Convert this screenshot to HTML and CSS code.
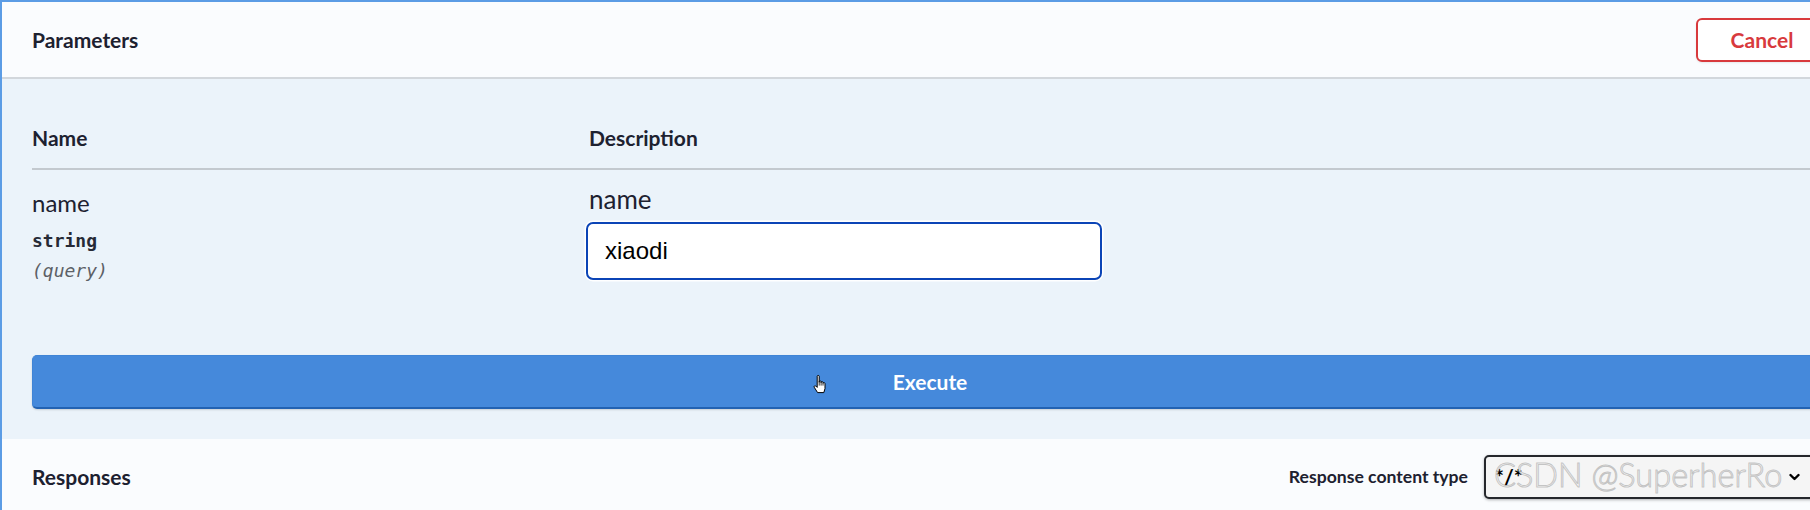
FILE: index.html
```html
<!DOCTYPE html>
<html lang="en">
<head>
<meta charset="utf-8">
<title>Parameters</title>
<link rel="stylesheet" href="styles.css">
</head>
<body>
<div class="opblock">
  <div class="section-header">
    <h4 class="section-title">Parameters</h4>
    <button class="btn-cancel" type="button">Cancel</button>
  </div>

  <div class="params">
    <div class="param-head">
      <div class="th">Name</div>
      <div class="th">Description</div>
    </div>
    <div class="param-row">
      <div class="col-name">
        <div class="param-name">name</div>
        <div class="param-type">string</div>
        <div class="param-in">(query)</div>
      </div>
      <div class="col-desc">
        <div class="desc-text">name</div>
        <input class="desc-input" type="text" value="xiaodi">
      </div>
    </div>
    <div class="execute-wrap">
      <button class="btn-execute" type="button">Execute</button>
      <svg class="cursor" width="14" height="20" viewBox="0 0 14 20" aria-hidden="true">
        <path d="M4.2 2.2C4.2 1.2 6.2 1.2 6.2 2.2V8.4V7.6C6.2 6.7 8.1 6.7 8.1 7.6V8.8V8.3C8.1 7.5 10 7.5 10 8.3V9.4V9.2C10 8.5 12 8.5 12 9.4V14.6L10.8 18.6H4.6L1.2 13.2C0.7 12.3 1.8 11.3 2.8 12L4.2 13.4Z" fill="#fff" stroke="#000" stroke-width="1" stroke-linejoin="round"/>
        <path d="M6.2 8.4V11.6M8.1 8.8V11.6M10 9.4V11.6" stroke="#000" stroke-width="0.8"/>
      </svg>
    </div>
  </div>

  <div class="responses-header">
    <h4 class="section-title">Responses</h4>
    <div class="content-type">
      <span class="ct-label">Response content type</span>
      <div class="ct-select">
        <span class="ct-value">*/*</span>
        <svg class="chevron" width="11" height="8" viewBox="0 0 11 8" aria-hidden="true">
          <path d="M1.5 2L5.5 6L9.5 2" fill="none" stroke="#000" stroke-width="2.4" stroke-linecap="round" stroke-linejoin="round"/>
        </svg>
        <span class="watermark">CSDN @SuperherRo</span>
      </div>
    </div>
  </div>
</div>
</body>
</html>
```

FILE: styles.css
```css
html, body {
  margin: 0;
  padding: 0;
  background: #fafcfe;
  overflow: hidden;
}

body {
  width: 1810px;
  height: 510px;
}

.opblock {
  width: 1860px;
  box-sizing: border-box;
  border-left: 2px solid #5b9ce5;
  border-top: 2px solid #5b9ce5;
  font-family: "Lato", "Roboto", sans-serif;
  color: #1d2130;
}

.section-title {
  margin: 0;
  font-family: "Lato", sans-serif;
  font-weight: 700;
  font-size: 21px;
  line-height: 25px;
  color: #1d2130;
}

/* ---------- header ---------- */
.section-header {
  height: 75px;
  padding: 0 32px 0 30px;
  background: #fafcfe;
  border-bottom: 2px solid #d2d7dc;
  display: flex;
  align-items: center;
  justify-content: space-between;
}

.btn-cancel {
  width: 132px;
  height: 44px;
  box-sizing: border-box;
  border: 2px solid #d83a3d;
  border-radius: 6px;
  background: #fff;
  color: #d83a3d;
  font-family: "Lato", sans-serif;
  font-weight: 700;
  font-size: 21px;
  padding: 0;
  box-shadow: 0 1px 2px rgba(0, 0, 0, 0.08);
}

/* ---------- parameters body ---------- */
.params {
  background: #ebf3fa;
  padding: 46px 32px 30px 30px;
}

.param-head {
  display: grid;
  grid-template-columns: 557px 1fr;
  border-bottom: 2px solid #c3c9cf;
}

.th {
  font-weight: 700;
  font-size: 21px;
  line-height: 25px;
  padding-bottom: 18px;
}

.param-row {
  display: grid;
  grid-template-columns: 557px 1fr;
  padding-top: 14px;
}

.col-name {
  display: flex;
  flex-direction: column;
}

.param-name {
  margin-top: 4px;
  font-family: "Lato", sans-serif;
  font-size: 24px;
  line-height: 30px;
  color: #1d2130;
}

.param-type {
  margin-top: 11px;
  font-family: "DejaVu Sans Mono", monospace;
  font-weight: 700;
  font-size: 18px;
  line-height: 24px;
  color: #262a36;
}

.param-in {
  margin-top: 6px;
  font-family: "DejaVu Sans Mono", monospace;
  font-style: italic;
  font-size: 18px;
  line-height: 24px;
  color: #5c6066;
}

.col-desc {
  display: flex;
  flex-direction: column;
  align-items: flex-start;
}

.desc-text {
  font-family: "Lato", sans-serif;
  font-size: 26px;
  line-height: 30px;
  color: #1d2130;
}

.desc-input {
  margin: 8px 0 0 -3px;
  width: 516px;
  height: 58px;
  box-sizing: border-box;
  border: 2.5px solid #0b44b6;
  border-radius: 7px;
  background: #fff;
  padding: 0 17px;
  font-family: "Liberation Sans", Arial, sans-serif;
  font-size: 24px;
  color: #000;
  outline: none;
  box-shadow: 0 0 0 1.5px #fff;
}

.execute-wrap {
  position: relative;
  margin-top: 72px;
}

.btn-execute {
  display: block;
  width: 100%;
  height: 54px;
  box-sizing: border-box;
  border: 1px solid #3f84d6;
  border-bottom: 2px solid #2262b2;
  border-radius: 5px;
  background: #4589db;
  color: #fff;
  font-family: "Lato", sans-serif;
  font-weight: 700;
  font-size: 21px;
  padding: 0;
  box-shadow: 0 1px 2px rgba(0, 0, 0, 0.15);
}

.cursor {
  position: absolute;
  left: 781px;
  top: 19px;
}

/* ---------- responses ---------- */
.responses-header {
  height: 75px;
  padding: 0 32px 0 30px;
  background: #fafcfe;
  display: flex;
  align-items: center;
  justify-content: space-between;
}

.content-type {
  display: flex;
  align-items: center;
  gap: 16px;
}

.ct-label {
  font-family: "Lato", sans-serif;
  font-weight: 700;
  font-size: 17.6px;
  color: #1d2130;
}

.ct-select {
  position: relative;
  width: 344px;
  height: 44px;
  box-sizing: border-box;
  border: 2.5px solid #25272c;
  border-radius: 5px;
  background: #f5f5f5;
  box-shadow: 0 1px 3px rgba(0, 0, 0, 0.3);
  display: flex;
  align-items: center;
  justify-content: space-between;
  padding: 0 26px 0 9px;
}

.ct-value {
  font-family: "Lato", sans-serif;
  font-weight: 700;
  font-size: 21px;
  color: #000;
}

.watermark {
  position: absolute;
  left: 8px;
  top: 2px;
  font-family: "Lato", "Liberation Sans", sans-serif;
  font-weight: 300;
  font-size: 32.5px;
  line-height: 32px;
  white-space: nowrap;
  color: rgba(255, 255, 255, 0.7);
  -webkit-text-stroke: 1px rgba(150, 150, 150, 0.55);
}
```
